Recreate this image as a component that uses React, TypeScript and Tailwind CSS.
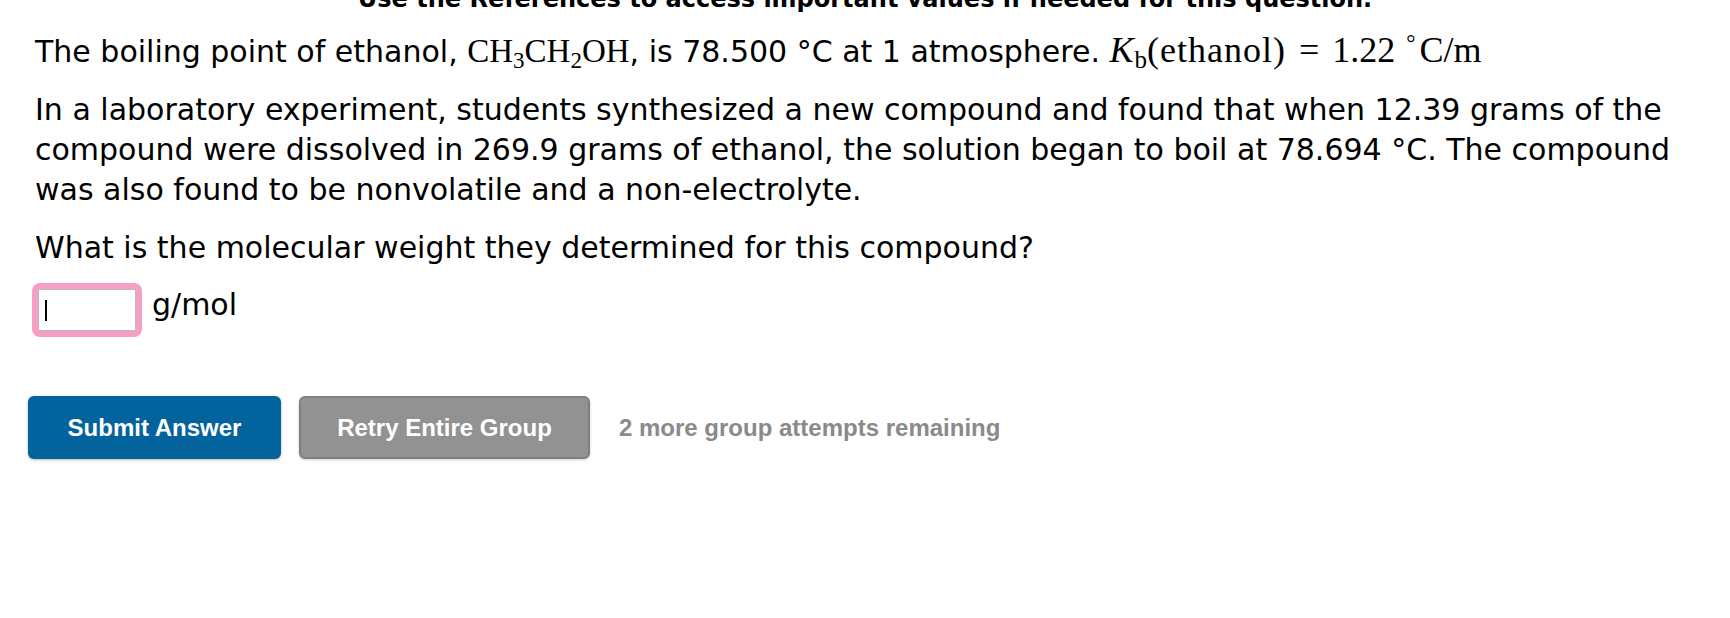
import React from 'react';

const mathFont = "font-['Liberation_Serif','Times_New_Roman',serif]";

function Sub({ children }: { children: React.ReactNode }) {
  return <span className="relative top-[6px] text-[23px] leading-none">{children}</span>;
}

export default function App() {
  return (
    <div className="w-[1730px] h-[618px] overflow-hidden bg-white text-black font-['DejaVu_Sans','Verdana',sans-serif]">
      <div className="-mt-[16px] h-[30px] text-center text-[24px] leading-[30px] font-bold whitespace-nowrap">
        Use the References to access important values if needed for this question.
      </div>

      <div className="pl-[35px] pr-[30px] text-[30px] leading-[40px]">
        <p className="mt-[18px] whitespace-nowrap">
          The boiling point of ethanol,{' '}
          <span className={`${mathFont} text-[33px] leading-none`}>
            CH<Sub>3</Sub>CH<Sub>2</Sub>OH
          </span>
          , is 78.500 °C at 1 atmosphere.{' '}
          <span className={`${mathFont} text-[36px] leading-none`}>
            <span className="italic">K</span>
            <span className="relative top-[6px] ml-[1px] text-[25px] leading-none">b</span>
            <span className="tracking-[1px]">(ethanol)</span>
            <span className="mx-[13px]">=</span>
            1.22
            <span className="relative -top-[11px] ml-[11px] mr-[4px] text-[23px] leading-none">°</span>
            C/m
          </span>
        </p>

        <p className="mt-[18px]">
          In a laboratory experiment, students synthesized a new compound and found that when 12.39 grams of the
          compound were dissolved in 269.9 grams of ethanol, the solution began to boil at 78.694 °C. The compound
          was also found to be nonvolatile and a non-electrolyte.
        </p>

        <p className="mt-[18px]">What is the molecular weight they determined for this compound?</p>
      </div>

      <div className="mt-[15px] pl-[32px] flex items-start text-[30px] leading-[40px]">
        <div className="rounded-[8px] bg-[#f59fc5] p-[6px]">
          <div className="flex h-[42px] w-[98px] items-center border border-[#b9b9b9] bg-white pl-[6px]">
            <span className="block h-[21px] w-[2px] bg-black" />
          </div>
        </div>
        <span className="ml-[10px] mt-[2px]">g/mol</span>
      </div>

      <div className="mt-[59px] pl-[28px] flex items-center font-['Liberation_Sans','Arial',sans-serif] text-[24px] font-bold">
        <button className="h-[63px] w-[253px] rounded-[6px] bg-[#03639c] text-white shadow-[0_1px_3px_rgba(0,0,0,0.3)]">
          Submit Answer
        </button>
        <button className="ml-[18px] h-[63px] w-[291px] rounded-[6px] border-2 border-[#7f7f7f] bg-[#929292] text-white shadow-[0_1px_3px_rgba(0,0,0,0.2)]">
          Retry Entire Group
        </button>
        <span className="ml-[29px] text-[#8a8a8a]">2 more group attempts remaining</span>
      </div>
    </div>
  );
}
